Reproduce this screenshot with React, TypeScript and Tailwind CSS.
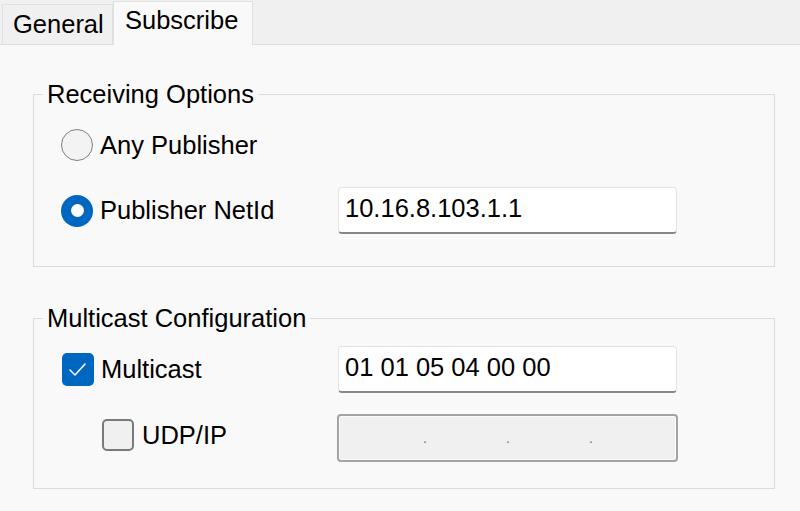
import React from "react";

const font = { fontFamily: '"Liberation Sans", Arial, sans-serif' };

function Radio({ checked }: { checked?: boolean }) {
  if (checked) {
    return (
      <div className="w-[32px] h-[32px] rounded-full bg-[#0067c0] flex items-center justify-center shrink-0">
        <div className="w-[13px] h-[13px] rounded-full bg-white" />
      </div>
    );
  }
  return <div className="w-[32px] h-[32px] rounded-full border-[1.5px] border-[#7f7f7f] bg-[#f3f3f3] shrink-0" />;
}

function Check({ checked }: { checked?: boolean }) {
  if (checked) {
    return (
      <div className="w-[32px] h-[33px] rounded-[5px] bg-[#0067c0] shrink-0 flex items-center justify-center">
        <svg width="32" height="33" viewBox="0 0 32 33">
          <polyline points="8,17 13,22 23,11" fill="none" stroke="white" strokeWidth="1.5" strokeLinecap="round" strokeLinejoin="round" />
        </svg>
      </div>
    );
  }
  return <div className="w-[32px] h-[32px] rounded-[5px] border-2 border-[#7a7a7a] bg-[#f0f0f0] shrink-0" />;
}

function TextBox({ value }: { value: string }) {
  return (
    <div className="w-[339px] h-[47px] bg-white border border-[#e3e3e3] border-b-2 border-b-[#878787] rounded-[4px] flex items-center pl-[6px] pb-[3px] text-black">
      {value}
    </div>
  );
}

export default function App() {
  return (
    <div className="w-[800px] h-[511px] bg-[#f9f9f9] text-[25.5px] text-black overflow-hidden" style={font}>
      {/* tab bar */}
      <div className="h-[45px] bg-[#f0f0f0] border-b border-[#dcdcdc] flex items-end pl-[2px]">
        <div className="h-[40px] w-[111px] border border-b-0 border-[#e0e0e0] bg-[#f0f0f0] pl-[10px] pt-[4px] leading-[30px]">
          General
        </div>
        <div className="h-[44px] w-[140px] border border-b-0 border-[#e0e0e0] bg-[#f9f9f9] -mb-px pl-[11px] pt-[3px] leading-[30px]">
          Subscribe
        </div>
      </div>

      <div className="pt-[34px] pl-[33px] pr-[26px]">
        {/* Receiving Options */}
        <fieldset className="w-[742px] border border-[#dcdcdc] pl-[27px] pt-[12px] pb-[32px]">
          <legend className="-ml-[18px] px-[4px] leading-[30px]">Receiving Options</legend>
          <div className="flex flex-col gap-[18px]">
            <div className="h-[48px] flex items-center">
              <Radio />
              <span className="ml-[7px]">Any Publisher</span>
            </div>
            <div className="h-[47px] flex items-center">
              <div className="w-[277px] flex items-center">
                <Radio checked />
                <span className="ml-[7px]">Publisher NetId</span>
              </div>
              <TextBox value="10.16.8.103.1.1" />
            </div>
          </div>
        </fieldset>

        {/* Multicast Configuration */}
        <fieldset className="mt-[36px] w-[742px] border border-[#dcdcdc] pl-[27px] pt-[13px] pb-[26px]">
          <legend className="-ml-[18px] px-[4px] leading-[30px]">Multicast Configuration</legend>
          <div className="flex flex-col gap-[21px]">
            <div className="h-[47px] flex items-center">
              <div className="w-[277px] flex items-center pl-[1px]">
                <Check checked />
                <span className="ml-[7px]">Multicast</span>
              </div>
              <TextBox value="01 01 05 04 00 00" />
            </div>
            <div className="flex items-start">
              <div className="w-[276px] h-[42px] flex items-center pl-[41px]">
                <Check />
                <span className="ml-[8px]">UDP/IP</span>
              </div>
              <div className="w-[341px] h-[48px] rounded-[4px] border-2 border-[#a3a3a3] bg-[#f0f0f0] shadow-[inset_0_0_0_1px_#fbfbfb] flex pl-[5px] pt-[12px] text-[#707070] text-[14px] leading-[20px]">
                <span className="w-[83px] text-right">.</span>
                <span className="w-[83px] text-right">.</span>
                <span className="w-[83px] text-right">.</span>
              </div>
            </div>
          </div>
        </fieldset>
      </div>
    </div>
  );
}
